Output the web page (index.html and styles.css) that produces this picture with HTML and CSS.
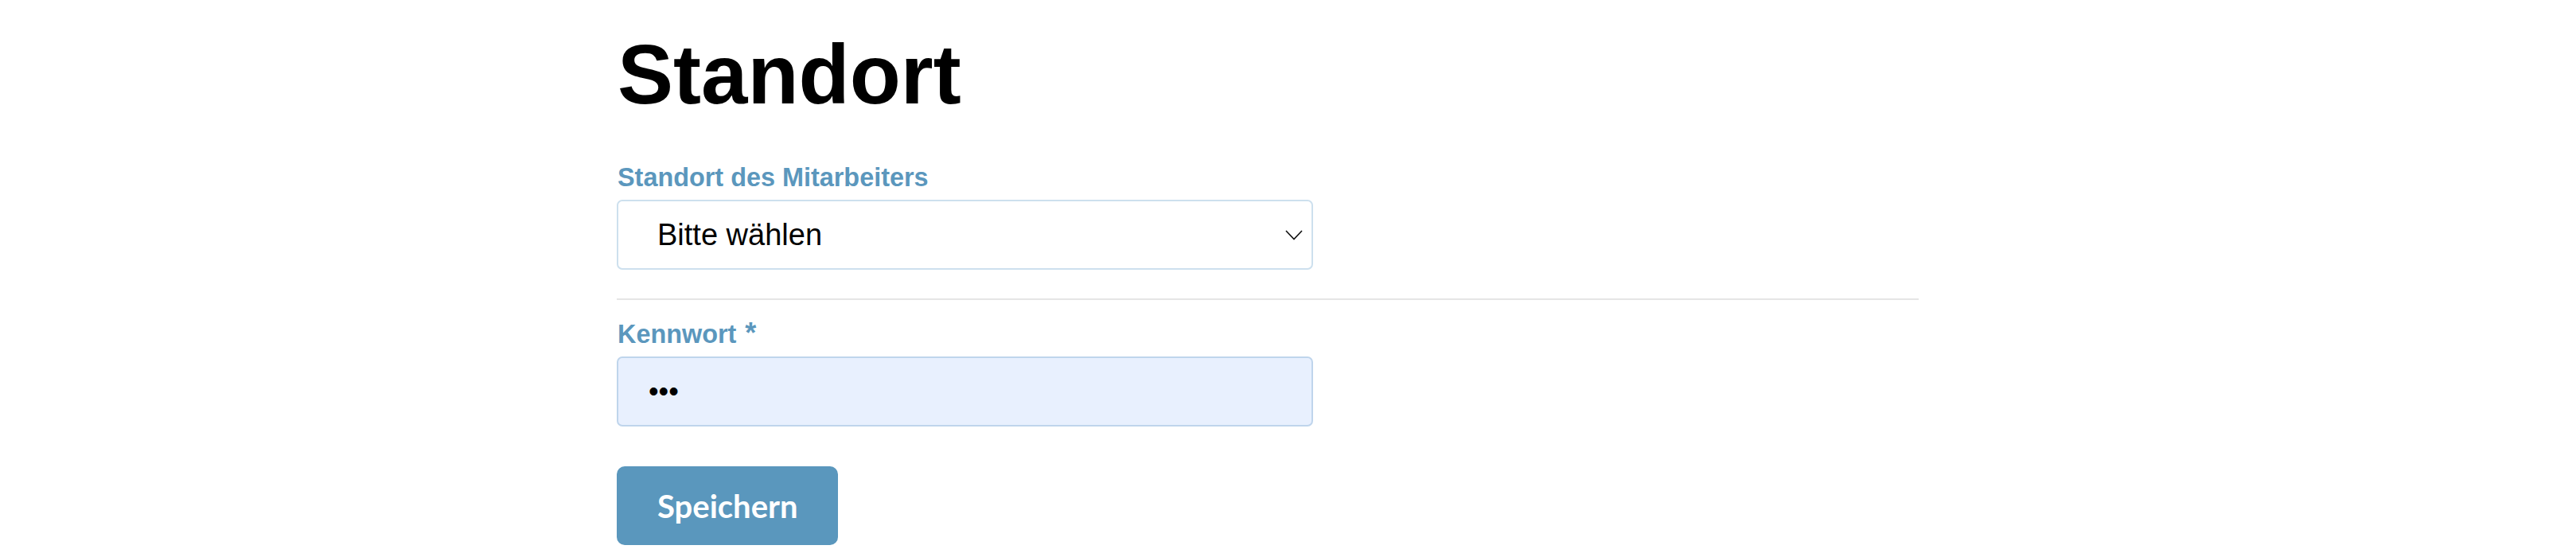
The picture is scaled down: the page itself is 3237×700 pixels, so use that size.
FILE: index.html
```html
<!DOCTYPE html>
<html lang="de">
<head>
<meta charset="utf-8">
<title>Standort</title>
<link rel="stylesheet" href="styles.css">
</head>
<body>
<main class="page">
  <h1 class="title">Standort</h1>
  <form class="form">
    <div class="field">
      <label class="label" for="standort">Standort des Mitarbeiters</label>
      <div class="select-wrap">
        <select class="select" id="standort">
          <option>Bitte wählen</option>
        </select>
        <svg class="chevron" width="22" height="13" viewBox="0 0 22 13" aria-hidden="true">
          <path d="M1 1 L11 11.5 L21 1" fill="none" stroke="#111" stroke-width="1.6"/>
        </svg>
      </div>
    </div>
    <hr class="divider">
    <div class="field">
      <label class="label" for="kennwort">Kennwort <span class="req">*</span></label>
      <input class="input" id="kennwort" type="password" value="abc">
    </div>
    <div class="actions">
      <button class="btn" type="button">Speichern</button>
    </div>
  </form>
</main>
</body>
</html>
```
FILE: styles.css
```css
html, body {
  margin: 0;
  padding: 0;
  background: #ffffff;
}

body {
  font-family: "Liberation Sans", Arial, sans-serif;
  color: #000;
}

.page {
  width: 1636px;
  margin-left: 775px;
  padding-top: 42px;
}

.title {
  margin: 0;
  font-size: 105px;
  line-height: 104px;
  font-weight: 700;
  padding-left: 1px;
}

.form {
  margin-top: 57px;
}

.field {
  display: flex;
  flex-direction: column;
}

.label {
  display: block;
  font-size: 32.4px;
  line-height: 40px;
  font-weight: 700;
  color: #5b97bd;
  margin-bottom: 8px;
  padding-left: 1px;
}

.req {
  font-size: 36px;
  margin-left: 2px;
}

.select-wrap {
  position: relative;
  width: 875px;
}

.select {
  -webkit-appearance: none;
  appearance: none;
  box-sizing: border-box;
  width: 875px;
  height: 88px;
  margin: 0;
  padding: 0 60px 0 49px;
  border: 2px solid #cde0ee;
  border-radius: 7px;
  background: #ffffff;
  font-family: "Liberation Sans", Arial, sans-serif;
  font-size: 38px;
  color: #000;
  outline: none;
}

.chevron {
  position: absolute;
  right: 13px;
  top: 38px;
}

.divider {
  margin: 36px 0 0;
  height: 2px;
  border: 0;
  background: #e5e5e5;
}

.field + .divider + .field {
  margin-top: 22px;
}

.input {
  box-sizing: border-box;
  width: 875px;
  height: 88px;
  margin: 0;
  padding: 0 38px;
  border: 2px solid #bfd5ec;
  border-radius: 7px;
  background: #e8f0fe;
  font-family: "Liberation Sans", Arial, sans-serif;
  font-size: 36px;
  color: #000;
  outline: none;
}

.actions {
  margin-top: 50px;
  display: flex;
}

.btn {
  height: 99px;
  padding: 0 51px;
  border: 0;
  border-radius: 10px;
  background: #5a97bd;
  color: #ffffff;
  font-family: Lato, "Open Sans", sans-serif;
  font-weight: 700;
  font-size: 40px;
  cursor: pointer;
}
```
